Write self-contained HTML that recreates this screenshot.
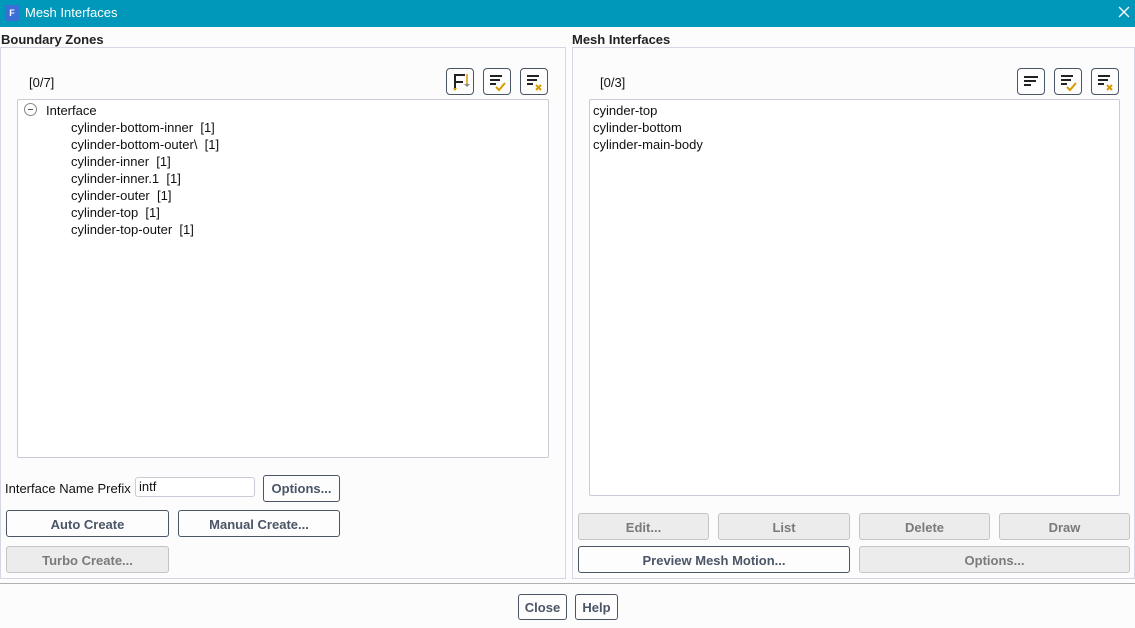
<!DOCTYPE html>
<html><head><style>
*{box-sizing:border-box;margin:0;padding:0}
body{width:1135px;height:628px;background:#fcfcfc;font-family:"Liberation Sans",sans-serif;font-size:13px;color:#111;position:relative;overflow:hidden}
.a{position:absolute}
.title{left:0;top:0;width:1135px;height:27px;background:#0098ba;color:#fff;font-size:13px}
.grp{border:1px solid #d3d8e2;background:#fcfcfc}
.hdr{font-weight:bold;font-size:13px;color:#222}
.list{border:1px solid #c8ccd4;background:#fff;border-radius:2px}
.btn{border:1px solid #4a5566;border-radius:3px;background:#fdfdfd;font-weight:bold;color:#4a5566;text-align:center;font-size:13px;line-height:27px}
.dis{border:1px solid #c4c4c4;background:#ececec;color:#7a7a7a}
.ib{width:28px;height:27px;border:1px solid #4a5566;border-radius:4px;background:#fdfdfd}
.ib svg{display:block}
.li{line-height:17px}
</style></head><body>
<div class="a title">
 <div class="a" style="left:5px;top:5px;width:14px;height:16px;background:#3a6fd8;border-radius:2px;color:#fff;font-size:9px;font-weight:bold;text-align:center;line-height:16px">F</div>
 <div class="a" style="left:25px;top:5px">Mesh Interfaces</div>
 <svg class="a" style="left:1118px;top:6px" width="12" height="12"><path d="M1 1l10 10M11 1L1 11" stroke="#fff" stroke-width="1.3"/></svg>
</div>
<div class="a hdr" style="left:1px;top:32px">Boundary Zones</div>
<div class="a hdr" style="left:572px;top:32px">Mesh Interfaces</div>
<div class="a grp" style="left:0;top:47px;width:566px;height:532px"></div>
<div class="a grp" style="left:572px;top:47px;width:563px;height:532px"></div>
<div class="a" style="left:29px;top:75px">[0/7]</div>
<div class="a" style="left:600px;top:75px">[0/3]</div>

<div class="a ib" style="left:446px;top:68px"><svg width="26" height="25"><path d="M8 21V6h10M8 13h8" stroke="#222" stroke-width="2" fill="none"/><path d="M20 5v10" stroke="#d99a00" stroke-width="1.5"/><path d="M17 15l3 3 3-3z" fill="#888"/><path d="M6 19l2 3 2-3z" fill="#d99a00"/></svg></div>
<div class="a ib" style="left:483px;top:68px"><svg width="26" height="25"><path d="M6 7h12M6 11h10M6 15h6" stroke="#222" stroke-width="2"/><path d="M12 18l3 3 6-7" stroke="#d99a00" stroke-width="2" fill="none"/></svg></div>
<div class="a ib" style="left:520px;top:68px"><svg width="26" height="25"><path d="M6 7h12M6 11h10M6 15h6" stroke="#222" stroke-width="2"/><path d="M15 16l5 5M20 16l-5 5" stroke="#d99a00" stroke-width="2"/></svg></div>
<div class="a ib" style="left:1017px;top:68px"><svg width="26" height="25"><path d="M6 8h14M6 12h12M6 16h7" stroke="#222" stroke-width="2"/></svg></div>
<div class="a ib" style="left:1054px;top:68px"><svg width="26" height="25"><path d="M6 7h12M6 11h10M6 15h6" stroke="#222" stroke-width="2"/><path d="M12 18l3 3 6-7" stroke="#d99a00" stroke-width="2" fill="none"/></svg></div>
<div class="a ib" style="left:1091px;top:68px"><svg width="26" height="25"><path d="M6 7h12M6 11h10M6 15h6" stroke="#222" stroke-width="2"/><path d="M15 16l5 5M20 16l-5 5" stroke="#d99a00" stroke-width="2"/></svg></div>

<div class="a list" style="left:17px;top:99px;width:532px;height:359px">
 <div class="a" style="left:6px;top:3px;width:13px;height:13px;border:1px solid #888;border-radius:50%"><div class="a" style="left:3px;top:5px;width:5px;height:1px;background:#555"></div></div>
 <div class="a li" style="left:28px;top:2px">Interface</div>
 <div class="a li" style="left:53px;top:19px">cylinder-bottom-inner&nbsp; [1]<br>cylinder-bottom-outer\&nbsp; [1]<br>cylinder-inner&nbsp; [1]<br>cylinder-inner.1&nbsp; [1]<br>cylinder-outer&nbsp; [1]<br>cylinder-top&nbsp; [1]<br>cylinder-top-outer&nbsp; [1]</div>
</div>
<div class="a list" style="left:589px;top:99px;width:531px;height:397px">
 <div class="a li" style="left:3px;top:2px">cyinder-top<br>cylinder-bottom<br>cylinder-main-body</div>
</div>

<div class="a" style="left:5px;top:481px">Interface Name Prefix</div>
<div class="a" style="left:135px;top:477px;width:120px;height:20px;border:1px solid #c8ccd4;border-radius:3px;background:#fff;padding-left:3px;line-height:18px">intf</div>
<div class="a btn" style="left:263px;top:475px;width:77px;height:27px;line-height:26px">Options...</div>
<div class="a btn" style="left:6px;top:510px;width:163px;height:27px">Auto Create</div>
<div class="a btn" style="left:178px;top:510px;width:162px;height:27px">Manual Create...</div>
<div class="a btn dis" style="left:6px;top:546px;width:163px;height:27px">Turbo Create...</div>

<div class="a btn dis" style="left:578px;top:513px;width:131px;height:27px">Edit...</div>
<div class="a btn dis" style="left:718px;top:513px;width:132px;height:27px">List</div>
<div class="a btn dis" style="left:859px;top:513px;width:131px;height:27px">Delete</div>
<div class="a btn dis" style="left:999px;top:513px;width:131px;height:27px">Draw</div>
<div class="a btn" style="left:578px;top:546px;width:272px;height:27px">Preview Mesh Motion...</div>
<div class="a btn dis" style="left:859px;top:546px;width:271px;height:27px">Options...</div>

<div class="a" style="left:0;top:583px;width:1135px;height:1px;background:#b0b0b0"></div>
<div class="a btn" style="left:518px;top:594px;width:49px;height:26px;line-height:26px">Close</div>
<div class="a btn" style="left:575px;top:594px;width:43px;height:26px;line-height:26px">Help</div>
</body></html>
